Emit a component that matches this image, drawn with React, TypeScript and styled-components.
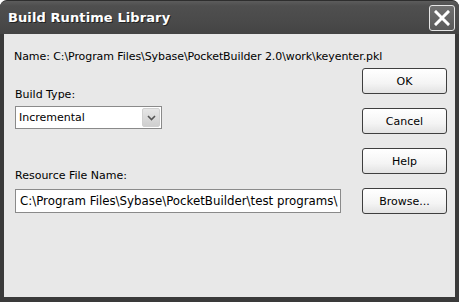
import styled, { createGlobalStyle } from "styled-components";

const GlobalStyle = createGlobalStyle`
  html, body {
    margin: 0;
    padding: 0;
    background: #ffffff;
  }
  * {
    box-sizing: border-box;
  }
`;

const Window = styled.div`
  width: 459px;
  height: 302px;
  display: flex;
  flex-direction: column;
  background: #3a3a3a;
  border-radius: 7px 7px 0 0;
  border-top: 1px solid #2e2e2e;
  overflow: hidden;
  font-family: "DejaVu Sans", Tahoma, sans-serif;
`;

const TitleBar = styled.div`
  height: 33px;
  display: flex;
  align-items: center;
  justify-content: space-between;
  padding: 0 4px 0 8px;
  background: linear-gradient(#5c5c5c 0%, #4f4f4f 15%, #4a4a4a 60%, #444444 100%);
`;

const Title = styled.span`
  color: #ffffff;
  font-family: "DejaVu Sans", sans-serif;
  font-weight: bold;
  font-size: 13px;
  letter-spacing: 0.1px;
  text-shadow: 1px 1px 0 #222222;
`;

const CloseButton = styled.div`
  width: 26px;
  height: 26px;
  margin-top: 1px;
  border: 1px solid #e6e6e6;
  border-radius: 3px;
  background: linear-gradient(#707070, #5a5a5a);
  display: flex;
  align-items: center;
  justify-content: center;
`;

const Client = styled.div`
  flex: 1;
  margin: 0 4px 5px 4px;
  background: #e8e8e8;
  padding: 10px 8px 0 10px;
  color: #000000;
  font-size: 11px;
`;

const NameLine = styled.div`
  height: 14px;
  line-height: 14px;
  margin-top: 6px;
  letter-spacing: -0.08px;
`;

const Columns = styled.div`
  display: flex;
  margin-top: 4px;
`;

const FormColumn = styled.div`
  width: 327px;
  padding-left: 1px;
  display: flex;
  flex-direction: column;
`;

const Label = styled.div<{ $top: number }>`
  margin-top: ${(p) => p.$top}px;
  height: 14px;
  line-height: 14px;
`;

const Combo = styled.div`
  margin-top: 4px;
  width: 147px;
  height: 23px;
  border: 1px solid #8a8a8a;
  background: #ffffff;
  display: flex;
  align-items: center;
  justify-content: space-between;
  padding: 0 1px 0 3px;
`;

const ComboArrow = styled.div`
  width: 18px;
  height: 19px;
  border: 1px solid #d0d0d0;
  border-radius: 2px;
  background: linear-gradient(#e6e6e6, #cfcfcf);
  display: flex;
  align-items: center;
  justify-content: center;
`;

const TextInput = styled.div`
  margin-top: 6px;
  width: 326px;
  height: 24px;
  border: 1px solid #8a8a8a;
  background: #ffffff;
  padding: 0 4px;
  font-size: 11.8px;
  line-height: 22px;
  white-space: nowrap;
  overflow: hidden;
`;

const ButtonColumn = styled.div`
  margin-left: auto;
  margin-right: 0;
  display: flex;
  flex-direction: column;
  gap: 14px;
`;

const Button = styled.div`
  width: 85px;
  height: 26px;
  border: 1px solid #3e3e3e;
  border-radius: 3px;
  background: linear-gradient(#ffffff 0%, #f4f4f4 60%, #e2e2e2 100%);
  display: flex;
  align-items: center;
  justify-content: center;
  font-size: 11px;
`;

function App() {
  const buttons = ["OK", "Cancel", "Help", "Browse..."];

  return (
    <>
      <GlobalStyle />
      <Window>
        <TitleBar>
          <Title>Build Runtime Library</Title>
          <CloseButton>
            <svg width="16" height="16" viewBox="0 0 16 16">
              <path
                d="M2 2 L14 14 M14 2 L2 14"
                stroke="#ffffff"
                strokeWidth="3"
                strokeLinecap="square"
              />
            </svg>
          </CloseButton>
        </TitleBar>
        <Client>
          <NameLine>
            Name: C:\Program Files\Sybase\PocketBuilder 2.0\work\keyenter.pkl
          </NameLine>
          <Columns>
            <FormColumn>
              <Label $top={20}>Build Type:</Label>
              <Combo>
                <span>Incremental</span>
                <ComboArrow>
                  <svg width="9" height="6" viewBox="0 0 9 6">
                    <path d="M1 1 L4.5 4.5 L8 1" stroke="#555555" strokeWidth="1.6" fill="none" />
                  </svg>
                </ComboArrow>
              </Combo>
              <Label $top={40}>Resource File Name:</Label>
              <TextInput>C:\Program Files\Sybase\PocketBuilder\test programs\</TextInput>
            </FormColumn>
            <ButtonColumn>
              {buttons.map((b) => (
                <Button key={b}>{b}</Button>
              ))}
            </ButtonColumn>
          </Columns>
        </Client>
      </Window>
    </>
  );
}

export default App;
